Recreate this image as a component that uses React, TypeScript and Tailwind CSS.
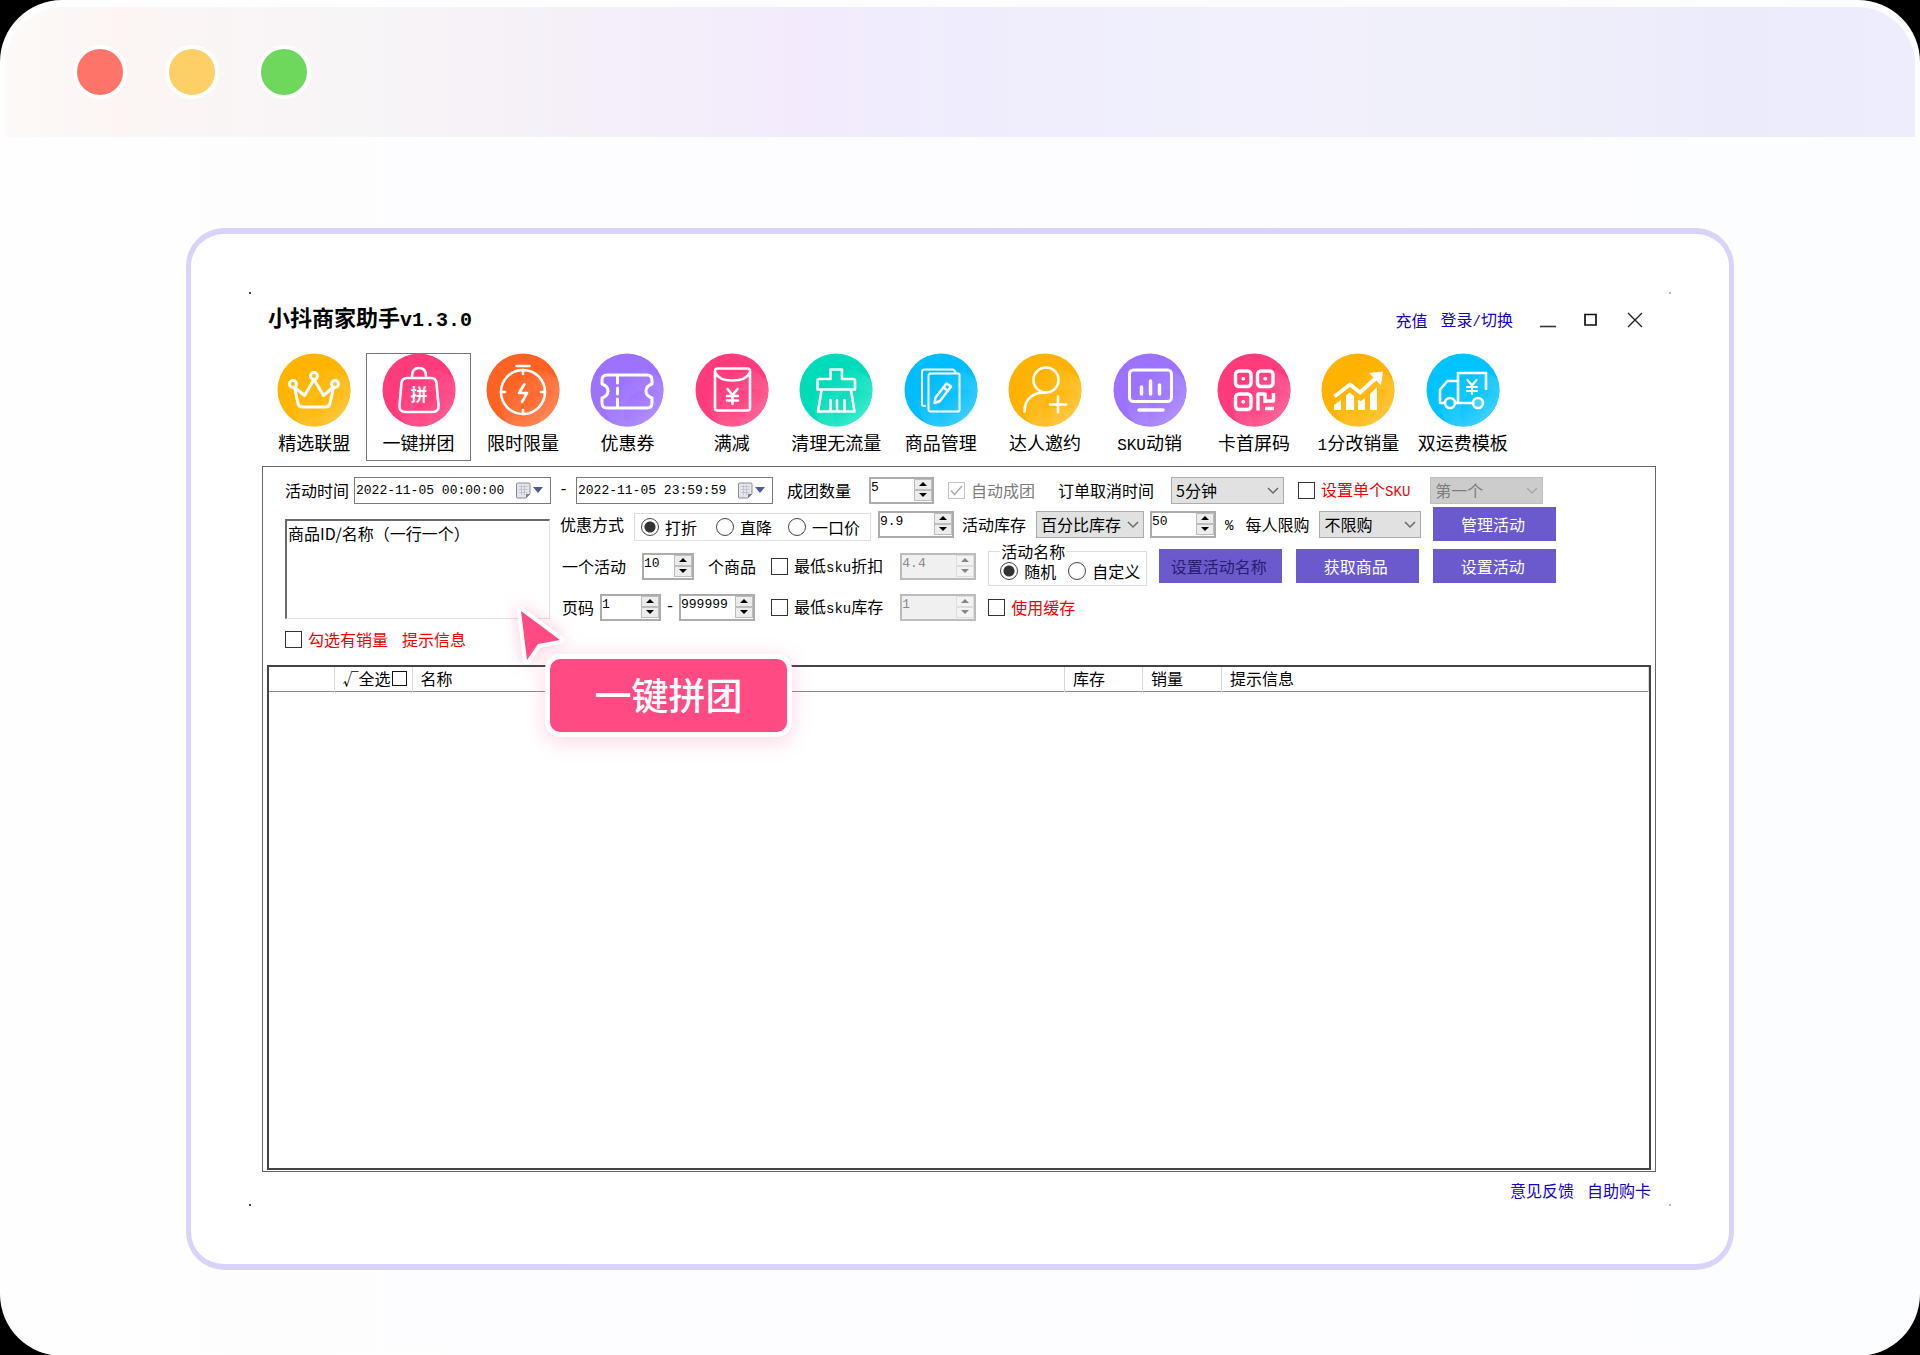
import React from "react";

const pink = "#ff3b7c";

/* Sets Latin runs in a monospaced face at half the width of the Chinese glyphs. */
function Mix({ children, big = false }: { children: string; big?: boolean }) {
  return (
    <>
      {children.split(/([A-Za-z0-9./%-]+)/).map((part, i) =>
        i % 2 === 1 ? (
          <span key={i} className={big ? "font-['Liberation_Mono'] text-[16px]" : "font-['Liberation_Mono'] text-[14px]"}>
            {part}
          </span>
        ) : (
          part
        ),
      )}
    </>
  );
}

function DateField({ label, value, className }: { label: string; value: string; className: string }) {
  return (
    <span className={`flex h-[27px] shrink-0 items-center border border-[#7a7a7a] bg-white ${className}`}>
      <input aria-label={label} defaultValue={value} className="w-0 min-w-0 flex-1 bg-transparent pt-0.5 pl-px font-['Liberation_Mono'] text-[13px] leading-5 outline-none" />
      <button aria-label={`${label}日历`} className="flex items-center gap-0.5 pr-[7px]">
        <svg width="16" height="17" viewBox="0 0 16 17">
          <path d="M2.500 1h11.500q1 0 1 1v10l-4 4H2.500q-1 0-1-1V2q0-1 1-1z" fill="#e3e5ea" stroke="#8c8d93" />
          <path d="M4 4.500h8.500M4 7.500h8.500M4 10.500h8.500M6.500 3v10M9.500 3v10" stroke="#b9bec9" strokeWidth=".8" />
          <path d="M15 12h-4v4z" fill="#7c7d84" />
        </svg>
        <svg width="10" height="6" viewBox="0 0 10 6"><path d="M0 0h10L5 6z" fill="#4c5a98" /></svg>
      </button>
    </span>
  );
}

function Spinner({ label, value, className, disabled = false }: { label: string; value: string; className: string; disabled?: boolean }) {
  const btn = disabled
    ? "flex flex-1 items-center justify-center border border-[#dedede] bg-[#f3f3f3] text-[#858585]"
    : "flex flex-1 items-center justify-center border border-[#bdbdbd] bg-[#ececec] text-black";
  return (
    <span className={`flex h-[27px] shrink-0 items-start border-2 ${disabled ? "border-[#bcbcbc] bg-[#f0f0f0] text-[#8a8a8a]" : "border-[#acacac] bg-white text-black"} ${className}`}>
      <input aria-label={label} defaultValue={value} disabled={disabled} className="w-0 min-w-0 flex-1 bg-transparent font-['Liberation_Mono'] text-[13px] leading-[18px] outline-none" />
      <span className="flex h-[22px] w-[18px] flex-col">
        <button aria-label={`${label}增加`} disabled={disabled} className={btn}>
          <svg width="8" height="4" viewBox="0 0 8 4"><path d="M0 4h8L4 0z" fill="currentColor" /></svg>
        </button>
        <button aria-label={`${label}减少`} disabled={disabled} className={btn}>
          <svg width="8" height="4" viewBox="0 0 8 4"><path d="M0 0h8L4 4z" fill="currentColor" /></svg>
        </button>
      </span>
    </span>
  );
}

function Select({ label, value, className, disabled = false }: { label: string; value: string; className: string; disabled?: boolean }) {
  return (
    <span className={`relative h-[27px] shrink-0 ${className}`}>
      <select
        aria-label={label}
        disabled={disabled}
        className={`h-full w-full appearance-none border pl-1 text-base leading-6 opacity-100 ${disabled ? "border-[#bfbfbf] bg-[#cccccc] text-[#7d7d7d]" : "border-[#acacac] bg-[#e1e1e1] text-black"}`}
      >
        <option>{value}</option>
      </select>
      <svg className="pointer-events-none absolute right-[5px] top-[10px]" width="12" height="8" viewBox="0 0 12 8" fill="none">
        <path d="M1 1l5 5 5-5" stroke={disabled ? "#a8a8a8" : "#6a6a6a"} strokeWidth="1.5" />
      </svg>
    </span>
  );
}

function Check({ label, className = "", tone = "text-black", checked = false, disabled = false }: { label: string; className?: string; tone?: string; checked?: boolean; disabled?: boolean }) {
  return (
    <label className={`flex shrink-0 items-center gap-1.5 whitespace-nowrap ${tone} ${className}`}>
      <span className="relative size-[17px]">
        <input
          type="checkbox"
          defaultChecked={checked}
          disabled={disabled}
          className={`block size-[17px] appearance-none border bg-white ${disabled ? "border-[#c4c4c4]" : "border-[#333333]"}`}
        />
        {checked && (
          <svg className="pointer-events-none absolute inset-0" width="17" height="17" viewBox="0 0 17 17" fill="none">
            <path d="M3 8.500l3.500 4L14 4" stroke="#b0b0b0" strokeWidth="1.600" />
          </svg>
        )}
      </span>
      <span><Mix>{label}</Mix></span>
    </label>
  );
}

function Radio({ name, label, checked = false, className = "" }: { name: string; label: string; checked?: boolean; className?: string }) {
  return (
    <label className={`flex shrink-0 items-center gap-1.5 whitespace-nowrap ${className}`}>
      <input
        type="radio"
        name={name}
        defaultChecked={checked}
        className="size-[18px] appearance-none rounded-full border border-[#444444] bg-white checked:bg-[radial-gradient(circle,#333_5px,transparent_6px)]"
      />
      {label}
    </label>
  );
}

function Btn({ children, className = "", tone = "text-white" }: { children: string; className?: string; tone?: string }) {
  return <button className={`h-[34px] w-[123px] shrink-0 bg-[#6a5acd] pr-1 ${tone} ${className}`}>{children}</button>;
}

function Txt({ children, className = "" }: { children: string; className?: string }) {
  return <span className={`shrink-0 whitespace-nowrap ${className}`}><Mix>{children}</Mix></span>;
}

function Dash({ className }: { className: string }) {
  return <span className={`shrink-0 text-center font-['Liberation_Mono'] ${className}`}>-</span>;
}

const s = { fill: "none", stroke: "#fff", strokeWidth: 2.6, strokeLinejoin: "round" as const, strokeLinecap: "round" as const };
const thin = { ...s, strokeWidth: 2 };

const tools: { label: string; from: string; to: string; icon: React.ReactNode }[] = [
  {
    label: "精选联盟", from: "#ffb400", to: "#ffd873",
    icon: <g {...s} strokeWidth={3}><path d="M17.500 34l3.500 16.500q1 3.500 4.500 3.500h23q3.500 0 4.500-3.500L56.500 34 46.500 42.500 37 26.500 27.500 42.500z" /><circle cx="16" cy="31" r="3.500" fill="#ffb400" /><circle cx="37" cy="23" r="3.500" fill="#ffb90f" /><circle cx="58" cy="31" r="3.500" fill="#ffc430" /></g>,
  },
  {
    label: "一键拼团", from: pink, to: "#ff75a3",
    icon: <g><g {...s}><path d="M30 23q0-8 7-8t7 8M25 25h24q5 0 5.500 5l2 22q.5 7-6 7h-27q-6.500 0-6-7l2-22q.5-5 5.500-5z" /></g><text x="37" y="48" fill="#fff" fontSize="17" fontWeight="700" textAnchor="middle">拼</text></g>,
  },
  {
    label: "限时限量", from: "#ff6323", to: "#ffaa8c",
    icon: <g {...s}><path d="M30.500 13h13" /><circle cx="37" cy="39" r="22" /><path d="M37 17v4M37 57v4M15 39h4M55 39h4" /><path d="M38.500 31L33 40h8l-5 9" /></g>,
  },
  {
    label: "优惠券", from: "#9d72ff", to: "#bfa5ff",
    icon: <g {...s} strokeWidth={3}><path d="M17 22h40q5 0 5 5v4q-6 2-6 7t6 7v5q0 5-5 5H17q-5 0-5-5v-5q6-2 6-7t-6-7v-4q0-5 5-5z" /><path d="M27.500 23v7M27.500 35v6M27.500 46v8" /></g>,
  },
  {
    label: "满减", from: pink, to: "#ff8db3",
    icon: <g><g {...s}><rect x="20" y="15.500" width="35" height="42" rx="2.500" /><path d="M20.500 20q3.500 7.500 17 7.500t17-7.500" /></g><g {...s}><path d="M32.500 36l5 6 5-6M32 43h11M32 47.500h11M37.500 42v9" /></g></g>,
  },
  {
    label: "清理无流量", from: "#00dcb9", to: "#71f5df",
    icon: <g {...s}><path d="M31.500 26v-9.500h11.500V26h11q2 0 2 2v8.500H18.500V28q0-2 2-2zM22.500 37.500L19 58.500h36.500L52 37.500M31.500 58v-11M38 58V47M45.500 58V47" /></g>,
  },
  {
    label: "商品管理", from: "#00bdff", to: "#73dcff",
    icon: <g {...thin}><path d="M21 53h-1q-2 0-2-2V19q0-2.500 2.500-2.500h28q2 0 3 3" /><path d="M26 20.500h28q1.500 0 1.500 1.500v35q0 1.500-1.500 1.500H27q-2.500 0-2.500-2.500V23q0-2.500 2.500-2.500" /><path d="M42.500 30.500l4.500 3-11 14.500-5.500 2 1-5.500zM39.500 34.500l4.500 3.500" strokeWidth="2.400" /></g>,
  },
  {
    label: "达人邀约", from: "#ffb300", to: "#ffdb85",
    icon: <g {...s}><circle cx="38" cy="27" r="12.500" /><path d="M16.500 58.500q.5-19 21.500-19" /><path d="M50 43.500v16M42 51.500h16" /></g>,
  },
  {
    label: "SKU动销", from: "#9d72ff", to: "#c3acff",
    icon: <g {...s} strokeWidth={3}><rect x="16.500" y="17" width="42" height="31.500" rx="4" /><path d="M28.500 34v7M37.500 28v13M46.500 32v9M26 57h24" strokeWidth="3.500" /></g>,
  },
  {
    label: "卡首屏码", from: pink, to: "#ff8db3",
    icon: <g {...s} strokeWidth={3.4}><rect x="18.500" y="18" width="15.500" height="15.500" rx="3.500" /><rect x="40.500" y="18" width="15.500" height="15.500" rx="3.500" /><rect x="18.500" y="41" width="15.500" height="15.500" rx="3.500" /><path d="M41 57.500V41h7v7h8.500V40M48 55.500h9M48 50v-2" strokeLinecap="butt" /><path d="M26 25.800h.5M48 25.800h.5M26 48.800h.5" /></g>,
  },
  {
    label: "1分改销量", from: "#ffb300", to: "#ffd873",
    icon: <g><path d="M13.500 43.500L29 31.500l10 8L56 24" {...s} strokeWidth={3.8} strokeLinecap="butt" /><path d="M48 20l14-1.500-2 14z" fill="#fff" /><path d="M13 52l7-5v10h-7zM25 42.500l3.500-3 4.500 3.500v14h-8zM37 47l3 1 4-3v12h-7zM49 41l7-7v23h-7z" fill="#fff" /></g>,
  },
  {
    label: "双运费模板", from: "#00c3ff", to: "#73dcff",
    icon: <g {...s} strokeWidth={2.6}><path d="M19 50h-5V36.500l7.500-8.500H32v22h-3M32 50V20h28v16M30 50h17" /><circle cx="24" cy="50" r="5" fill="#14c6ff" /><circle cx="52" cy="50" r="5" fill="#45d0ff" /><path d="M41.500 27l4.500 5.500 4.500-5.500M41 34h10M41 38h10M46 33v8" strokeWidth="2.200" /></g>,
  },
];

function ToolIcon({ id, from, to, children }: { id: string; from: string; to: string; children: React.ReactNode }) {
  return (
    <svg className="-mt-px" width="74" height="74" viewBox="0 0 74 74" aria-hidden="true">
      <defs>
        <linearGradient id={id} x1="0.2" y1="0.2" x2="0.9" y2="0.95">
          <stop offset="0" stopColor={from} />
          <stop offset="1" stopColor={to} />
        </linearGradient>
        <clipPath id={`${id}c`}><circle cx="37" cy="37" r="36.500" /></clipPath>
      </defs>
      <g clipPath={`url(#${id}c)`}>
        <rect width="74" height="74" fill={from} />
        <circle cx="47" cy="49" r="33" fill={`url(#${id})`} opacity=".7" />
        <circle cx="58" cy="60" r="24" fill={`url(#${id})`} opacity=".6" />
      </g>
      {children}
    </svg>
  );
}

export default function App() {
  return (
    <div className="bg-black">
      <div className="min-h-screen overflow-hidden rounded-[62px] bg-[linear-gradient(90deg,#fefefe,#fdfcff_40%,#fcfdff)] pt-[7px] font-['Noto_Sans_CJK_SC',sans-serif] text-base leading-6 text-black">
        <header className="mx-[5px] flex h-[130px] items-center gap-[38px] rounded-t-[58px] bg-[linear-gradient(90deg,#fcfaf8,#fcf5f4_6%,#f8f5f7_18%,#f4eff8_32%,#f3ebfd_42%,#efedfd_50%,#f1f0fc_65%,#f0f0fa_78%,#ebebfc_90%,#ededfe)] pb-px pl-[68px]">
          <button aria-label="关闭页面" className="size-[54px] rounded-full border-4 border-white bg-[#ff7468]" />
          <button aria-label="最小化页面" className="size-[54px] rounded-full border-4 border-white bg-[#fdd067]" />
          <button aria-label="全屏页面" className="size-[54px] rounded-full border-4 border-white bg-[#6dd85c]" />
        </header>

        <main className="px-[186px] pt-[91px] pb-[86px]">
          <div className="rounded-[38px] border-x-[5px] border-y-[6px] border-[#dad3f9] bg-white px-[58px] py-[58px]">
            <div className="relative">
              <i className="absolute left-0 top-0 size-[2px] bg-[#335555]" />
              <i className="absolute right-0 top-0 size-[2px] bg-[#bbbbbb]" />
              <i className="absolute bottom-0 left-0 size-[2px] bg-[#335555]" />
              <i className="absolute bottom-0 right-0 size-[2px] bg-[#bbbbbb]" />

              <div className="flex h-[52px] items-center pl-[19px] pr-[28px]">
                <h1 className="mr-auto text-[22px] font-bold leading-8">
                  小抖商家助手<span className="font-['Liberation_Mono'] text-[20px]">v1.3.0</span>
                </h1>
                <div className="flex items-center pt-1">
                  <a href="#recharge" className="text-[#1400c8]">充值</a>
                  <a href="#login" className="ml-[13px] text-[#1400c8]"><Mix>登录/切换</Mix></a>
                  <button aria-label="最小化" className="ml-[27px]">
                    <svg width="16" height="20" viewBox="0 0 16 20"><path d="M0 16.500h16" stroke="#333" strokeWidth="1.600" /></svg>
                  </button>
                  <button aria-label="最大化" className="ml-[28px]">
                    <svg width="13" height="20" viewBox="0 0 13 20"><path d="M1 4.500h11v10.500H1z" fill="none" stroke="#111" strokeWidth="1.700" /></svg>
                  </button>
                  <button aria-label="关闭" className="ml-[30px]">
                    <svg width="16" height="20" viewBox="0 0 16 20"><path d="M1 3l14 14M15 3L1 17" stroke="#222" strokeWidth="1.400" /></svg>
                  </button>
                </div>
              </div>

              <nav className="mt-[9px] ml-[13px] grid max-w-[1253px] grid-cols-12">
                {tools.map((t, i) => (
                  <button
                    key={t.label}
                    className={`flex h-[108px] flex-col items-center whitespace-nowrap border text-[18px] leading-6 ${i === 1 ? "border-[#777777]" : "border-transparent"}`}
                  >
                    <ToolIcon id={`tool${i}`} from={t.from} to={t.to}>{t.icon}</ToolIcon>
                    <span className="mt-[3px]"><Mix big>{t.label}</Mix></span>
                  </button>
                ))}
              </nav>

              <section className="mt-[5px] mr-[15px] ml-[13px] border border-[#666666] bg-white">
                <div className="flex h-[40px] items-center pt-1.5 pl-[22px]">
                  <Txt>活动时间</Txt>
                  <DateField label="开始时间" value="2022-11-05 00:00:00" className="ml-[5px] w-[197px]" />
                  <Dash className="w-[25px]" />
                  <DateField label="结束时间" value="2022-11-05 23:59:59" className="w-[197px]" />
                  <Txt className="ml-[14px]">成团数量</Txt>
                  <Spinner label="成团数量" value="5" className="ml-[18px] w-[65px]" />
                  <Check label="自动成团" checked disabled tone="text-[#7c7c7c]" className="ml-[14px]" />
                  <Txt className="ml-[23px]">订单取消时间</Txt>
                  <Select label="订单取消时间" value="5分钟" className="ml-[17px] w-[113px]" />
                  <Check label="设置单个SKU" tone="text-[#f00000]" className="ml-[14px]" />
                  <Select label="单个SKU" value="第一个" disabled className="ml-5 w-[113px]" />
                </div>

                <div className="flex pl-[22px]">
                  <div className="w-[265px] shrink-0 pt-3">
                    <textarea
                      aria-label="商品ID或名称"
                      defaultValue="商品ID/名称（一行一个）"
                      className="block h-[100px] w-full resize-none border border-t-2 border-l-2 border-[#e0e0e0] border-t-[#6a6a6a] border-l-[#6a6a6a] bg-white pl-px text-base leading-6 outline-none"
                    />
                    <div className="mt-2 mb-[14px] flex gap-[14px] text-[#f00000]">
                      <Check label="勾选有销量" tone="text-[#f00000]" />
                      <Txt>提示信息</Txt>
                    </div>
                  </div>

                  <div className="ml-[10px] flex flex-col gap-2">
                    <div className="flex h-[34px] items-center">
                      <Txt>优惠方式</Txt>
                      <div className="ml-[10px] flex h-[28px] w-[237px] items-center self-end border border-[#dddddd] pl-[6px]">
                        <Radio name="discount" label="打折" checked />
                        <Radio name="discount" label="直降" className="ml-[19px]" />
                        <Radio name="discount" label="一口价" className="ml-4" />
                      </div>
                      <Spinner label="折扣" value="9.9" className="ml-[7px] w-[76px]" />
                      <Txt className="ml-2">活动库存</Txt>
                      <Select label="活动库存" value="百分比库存" className="ml-2.5 w-[108px]" />
                      <Spinner label="库存百分比" value="50" className="ml-1.5 w-[66px]" />
                      <Txt className="ml-[9px]">%</Txt>
                      <Txt className="ml-3">每人限购</Txt>
                      <Select label="每人限购" value="不限购" className="ml-2.5 w-[102px]" />
                      <Btn className="ml-3">管理活动</Btn>
                    </div>

                    <div className="flex h-[34px] items-center pl-[2px]">
                      <Txt>一个活动</Txt>
                      <Spinner label="每个活动商品数" value="10" className="ml-4 w-[52px]" />
                      <Txt className="ml-[14px]">个商品</Txt>
                      <Check label="最低sku折扣" className="ml-[15px]" />
                      <Spinner label="最低sku折扣" value="4.4" disabled className="ml-[17px] w-[76px]" />
                      <fieldset className="mb-1 ml-3 h-[44px] w-[159px] shrink-0 border border-[#dddddd] pl-[11px]">
                        <legend className="px-px leading-[18px]">活动名称</legend>
                        <div className="flex leading-[22px]">
                          <Radio name="title" label="随机" checked />
                          <Radio name="title" label="自定义" className="ml-3" />
                        </div>
                      </fieldset>
                      <Btn className="ml-3" tone="text-[#2a1c70]">设置活动名称</Btn>
                      <Btn className="ml-[14px]">获取商品</Btn>
                      <Btn className="ml-[14px]">设置活动</Btn>
                    </div>

                    <div className="flex h-8 items-center pl-[2px]">
                      <Txt>页码</Txt>
                      <Spinner label="起始页码" value="1" className="ml-1.5 w-[61px]" />
                      <Dash className="w-[18px]" />
                      <Spinner label="结束页码" value="999999" className="w-[76px]" />
                      <Check label="最低sku库存" className="ml-4" />
                      <Spinner label="最低sku库存" value="1" disabled className="ml-[17px] w-[76px]" />
                      <Check label="使用缓存" tone="text-[#f00000]" className="ml-3" />
                    </div>
                  </div>
                </div>

                <div className="mx-1 mb-px min-h-[505px] border-2 border-[#444444]">
                  <table className="w-full table-fixed border-collapse text-left">
                    <thead>
                      <tr className="h-6 border-b border-[#8a8a8a] [&>th]:border-r [&>th]:border-[#d8d8d8] [&>th]:p-0 [&>th]:pl-2 [&>th]:font-normal [&>th]:leading-[23px]">
                        <th aria-label="序号" className="w-[65px]" />
                        <th className="w-[78px]">
                          <label className="flex items-center gap-px">
                            √全选
                            <input type="checkbox" className="size-[15px] appearance-none border border-[#111111] bg-white" />
                          </label>
                        </th>
                        <th>名称</th>
                        <th className="w-[78px]">库存</th>
                        <th className="w-[79px]">销量</th>
                        <th className="w-[427px]">提示信息</th>
                      </tr>
                    </thead>
                  </table>
                </div>
              </section>

              <footer className="flex h-[34px] items-center justify-end gap-[13px] pt-px pr-[20px] text-[#1400c8]">
                <a href="#feedback">意见反馈</a>
                <a href="#cards">自助购卡</a>
              </footer>

              <svg className="absolute left-[251px] top-[301px] overflow-visible" width="70" height="76" viewBox="0 0 70 76" aria-hidden="true">
                <path
                  d="M21 18L60 47 38 51 27 67z"
                  fill="#ff4b84"
                  stroke="#fff"
                  strokeWidth="8"
                  paintOrder="stroke"
                  strokeLinejoin="round"
                  className="drop-shadow-[0_0_8px_rgba(255,75,132,0.3)]"
                />
              </svg>
              <div className="absolute left-[301px] top-[367px] flex h-[73px] w-[237px] items-center justify-center rounded-[10px] bg-[#ff4b84] pb-0.5 text-[37px] font-medium leading-none text-white shadow-[0_0_0_5px_#fff,0_4px_20px_6px_rgba(255,75,132,0.22)]">
                一键拼团
              </div>
            </div>
          </div>
        </main>
      </div>
    </div>
  );
}
